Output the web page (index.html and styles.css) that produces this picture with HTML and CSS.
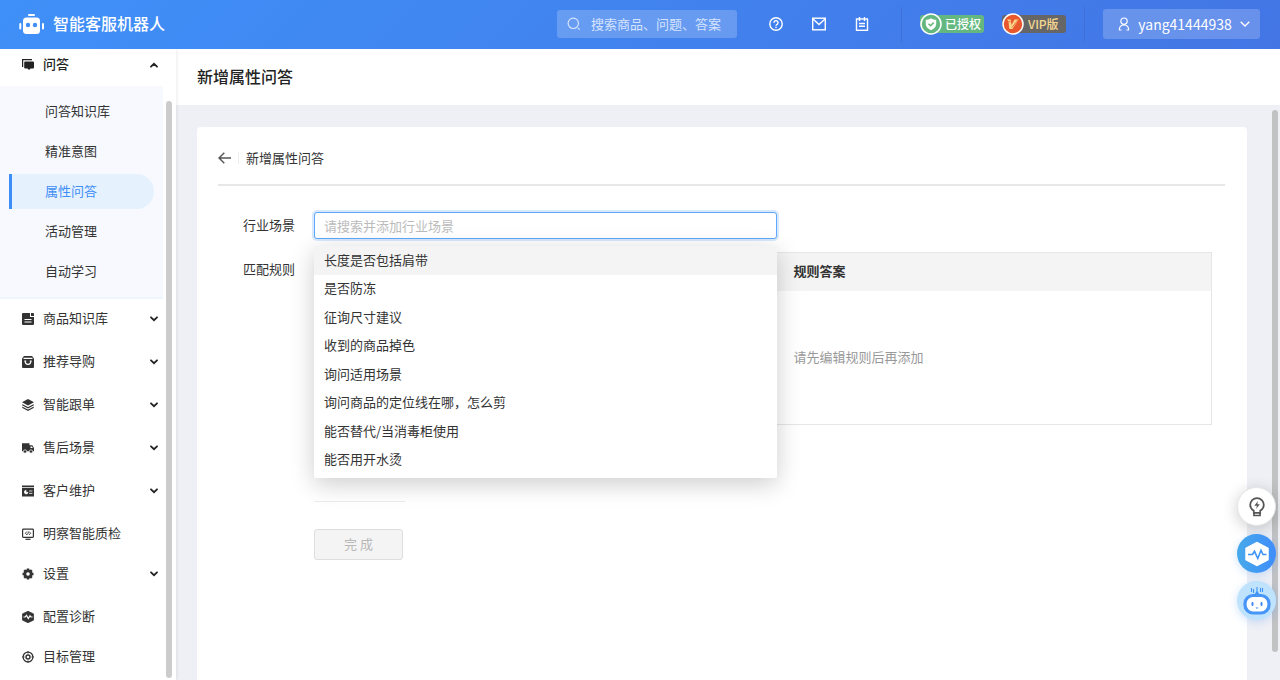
FILE: index.html
```html
<!DOCTYPE html>
<html lang="zh-CN">
<head>
<meta charset="utf-8">
<meta name="viewport" content="width=device-width, initial-scale=1">
<title>新增属性问答</title>
<link rel="stylesheet" href="styles.css">
</head>
<body>
<svg class="defs" aria-hidden="true">
  <symbol id="chevron" viewBox="0 0 8 6"><path d="M1 1.300 4 4.200 7 1.300" fill="none" stroke="currentColor" stroke-width="1.800" stroke-linecap="round"/></symbol>
</svg>
<div class="app">
  <header class="topbar">
    <a class="brand" href="#">
      <svg width="26" height="22" viewBox="0 0 26 22" fill="#fff" aria-hidden="true">
        <rect x="9" y="1" width="7" height="2" rx="1"/>
        <rect x="4" y="4.500" width="17" height="16.500" rx="3.500"/>
        <rect x="0.300" y="10" width="2" height="6.500" rx="1"/><rect x="23" y="10" width="2" height="6.500" rx="1"/>
        <circle cx="9" cy="12" r="2.200" fill="#3f8df6"/><circle cx="16" cy="12" r="2.200" fill="#3f8df6"/>
      </svg>
      <span>智能客服机器人</span>
    </a>
    <label class="search">
      <svg width="14" height="14" viewBox="0 0 14 14" fill="none" stroke="currentColor" stroke-width="1.200" aria-hidden="true"><circle cx="6.300" cy="6.300" r="5.200"/><path d="m11 11 1.700 1.700"/></svg>
      <input type="text" placeholder="搜索商品、问题、答案" aria-label="搜索">
    </label>
    <nav class="tools" aria-label="工具">
      <button type="button" aria-label="帮助"><svg width="14" height="14" viewBox="0 0 14 14" fill="none" stroke="#fff" stroke-width="1.400"><circle cx="7" cy="7" r="6.200"/><path d="M5 5.700a2 2 0 1 1 3.100 1.600C7.300 7.800 7 8.100 7 8.800M7 9.700V11"/></svg></button>
      <button type="button" aria-label="消息"><svg width="14" height="14" viewBox="0 0 14 14" fill="none" stroke="#fff" stroke-width="1.400"><rect x=".7" y="1.200" width="12.600" height="11.600"/><path d="m1 2 6 5.500L13 2"/></svg></button>
      <button type="button" aria-label="记录"><svg width="14" height="14" viewBox="0 0 14 14" fill="none" stroke="#fff" stroke-width="1.400"><rect x="1.500" y="2" width="11" height="11.300"/><path d="M4.500 0v4M9.500 0v4M4 6.500h6M4 9.300h6"/></svg></button>
    </nav>
    <div class="badges">
      <span class="badge badge-auth">
        <svg width="22" height="22" viewBox="0 0 22 22" aria-hidden="true"><circle cx="11" cy="11" r="10" fill="#64b87f" stroke="#fff" stroke-width="1.500"/><path d="M11 5.200c2 1.300 3.500 1.600 5.200 1.600v4.200c0 3-2.200 4.800-5.200 6.200-3-1.400-5.200-3.200-5.200-6.200V6.800C7.500 6.800 9 6.500 11 5.200Z" fill="#fff"/><path d="m8.500 10.700 2 2 3.200-3.100" fill="none" stroke="#64b87f" stroke-width="1.500"/></svg>
        <span>已授权</span>
      </span>
      <span class="badge badge-vip">
        <svg width="22" height="22" viewBox="0 0 22 22" aria-hidden="true"><circle cx="11" cy="11" r="10" fill="#e9582c" stroke="#fff" stroke-width="1.500"/><path d="M5 6.500h3.600l1 5.500 2.900-5.500h4.300L10.400 16H7.300L6.500 8.500Z" fill="#fbd58b"/><path d="m10 14.500 6-7.500M6.500 8.700h2" stroke="#e9582c" stroke-width=".8"/></svg>
        <span>VIP版</span>
      </span>
    </div>
    <button type="button" class="user">
      <svg width="12" height="14" viewBox="0 0 12 14" fill="none" stroke="#fff" stroke-width="1.200" aria-hidden="true"><circle cx="6" cy="4.200" r="3.200"/><path d="M1 13h2.500M11 13H8.500M1.300 13c0-3 1.500-5 4.700-5s4.700 2 4.700 5"/></svg>
      <span>yang41444938</span>
      <svg width="10" height="6" viewBox="0 0 10 6" fill="none" stroke="#fff" stroke-width="1.300" aria-hidden="true"><path d="m.7.700 4.300 4.300L9.300.7"/></svg>
    </button>
  </header>

  <aside class="sidebar">
    <nav class="menu" aria-label="主菜单">
      <button type="button" class="row row-open" aria-expanded="true">
        <svg class="icon" viewBox="0 0 12 12" fill="currentColor"><path d="M0 0h10v1.200H1.200V8H0Z"/><path d="M3.200 2.400H11a1 1 0 0 1 1 1v5a1 1 0 0 1-1 1H8.600L7 11 5.500 9.400H3.200a1 1 0 0 1-1-1v-5a1 1 0 0 1 1-1Z"/></svg>
        <span>问答</span><svg class="arrow arrow-up"><use href="#chevron"/></svg>
      </button>
      <div class="submenu">
        <a href="#">问答知识库</a>
        <a href="#">精准意图</a>
        <a href="#" class="active" aria-current="page">属性问答</a>
        <a href="#">活动管理</a>
        <a href="#">自动学习</a>
      </div>
      <button type="button" class="row row-group">
        <svg class="icon" viewBox="0 0 12 12"><path d="M1 0h7v4h4v7a1 1 0 0 1-1 1H1a1 1 0 0 1-1-1V1a1 1 0 0 1 1-1ZM9 0h2a1 1 0 0 1 1 1v2H9Z" fill="currentColor"/><path d="M2.500 6.500h7M2.500 9h7" stroke="#fff"/></svg>
        <span>商品知识库</span><svg class="arrow"><use href="#chevron"/></svg>
      </button>
      <button type="button" class="row row-group">
        <svg class="icon" viewBox="0 0 12 12"><path d="M2 0h8l2 2.500V11a1 1 0 0 1-1 1H1a1 1 0 0 1-1-1V2.500Z" fill="currentColor"/><path d="M1.500 2.300h9M3.200 5c0 4.500 5.600 4.500 5.600 0" fill="none" stroke="#fff" stroke-width="1.200"/><path d="M2.300 5h2M7.700 5h2" stroke="#fff"/></svg>
        <span>推荐导购</span><svg class="arrow"><use href="#chevron"/></svg>
      </button>
      <button type="button" class="row row-group">
        <svg class="icon" viewBox="0 0 12 12"><path d="m6 0 6 3.200-6 3.300L0 3.200Z" fill="currentColor"/><path d="m.3 5.800 5.700 3 5.700-3M.3 8.300l5.700 3 5.700-3" fill="none" stroke="currentColor" stroke-width="1.200"/></svg>
        <span>智能跟单</span><svg class="arrow"><use href="#chevron"/></svg>
      </button>
      <button type="button" class="row row-group">
        <svg class="icon" viewBox="0 0 12 12" fill="currentColor"><path d="M0 1.300h7.500v8H0ZM7.500 3.300h2.800L12 6v3.300H7.500Z"/><path d="M8.500 4.400h1.400l1 1.600H8.500Z" fill="#fff"/><circle cx="3" cy="9.500" r="1.700" stroke="#fff" stroke-width=".7"/><circle cx="9" cy="9.500" r="1.700" stroke="#fff" stroke-width=".7"/></svg>
        <span>售后场景</span><svg class="arrow"><use href="#chevron"/></svg>
      </button>
      <button type="button" class="row row-group">
        <svg class="icon" viewBox="0 0 12 12"><path d="M0 .5h12v1.700H0ZM0 3h12v8.500H0Z" fill="currentColor"/><path d="M4 5.300a1.800 1.800 0 1 0 2 2.100H4ZM7.200 6h3.200M7.200 8.400h3.200" fill="#fff" stroke="#fff" stroke-width=".8"/></svg>
        <span>客户维护</span><svg class="arrow"><use href="#chevron"/></svg>
      </button>
      <a href="#" class="row">
        <svg class="icon" viewBox="0 0 12 12" fill="none" stroke="currentColor"><rect x=".6" y="1.100" width="10.800" height="8.300" rx=".8" stroke-width="1.200"/><path d="M3.500 11.300h5" stroke-width="1.200"/><path d="M5 3.500 3.300 5.300 5 6.900M7 3.500l1.700 1.800L7 6.900M6.500 3.800l-1 2.800" stroke-width=".9"/></svg>
        <span>明察智能质检</span>
      </a>
      <button type="button" class="row row-group">
        <svg class="icon" viewBox="0 0 12 12"><path d="M6 .5v11M.5 6h11M2.200 2.200l7.600 7.600M9.800 2.200 2.200 9.800" stroke="currentColor" stroke-width="2.500"/><circle cx="6" cy="6" r="4.500" fill="currentColor"/><circle cx="6" cy="6" r="1.800" fill="#fff"/></svg>
        <span>设置</span><svg class="arrow"><use href="#chevron"/></svg>
      </button>
      <a href="#" class="row">
        <svg class="icon" viewBox="0 0 12 12"><path d="m6 .3 5.600 2.600v6.200L6 11.700.4 9.100V2.900Z" fill="currentColor" stroke="currentColor" stroke-width=".8" stroke-linejoin="round"/><path d="M1.500 6h1.800l1.200-1.700 1.800 3.200L8 4.700 9 6h1.500" fill="none" stroke="#fff" stroke-width="1.200"/></svg>
        <span>配置诊断</span>
      </a>
      <a href="#" class="row">
        <svg class="icon" viewBox="0 0 12 12" fill="none" stroke="currentColor"><circle cx="6" cy="6" r="4.900" stroke-width="1.200"/><circle cx="6" cy="6" r="2" stroke-width="1.400"/><path d="M6 0v2.500M6 9.500V12M0 6h2.500M9.500 6H12"/></svg>
        <span>目标管理</span>
      </a>
    </nav>
    <div class="thumb thumb-side"></div>
  </aside>

  <main class="main">
    <h1 class="page-title">新增属性问答</h1>
    <div class="content">
      <section class="card">
        <div class="card-head">
          <button type="button" class="back" aria-label="返回"><svg width="13" height="12" viewBox="0 0 13 12" fill="none" stroke="#555" stroke-width="1.400"><path d="M6.300.7 1 6l5.300 5.300M1 6h12"/></svg></button>
          <h2>新增属性问答</h2>
        </div>
        <form class="form">
          <label class="label label-input" for="scene">行业场景</label>
          <div class="picker">
            <input id="scene" type="text" role="combobox" aria-expanded="true" aria-controls="scene-list" placeholder="请搜索并添加行业场景">
            <ul class="options" id="scene-list" role="listbox">
              <li role="option" aria-selected="false" class="hover">长度是否包括肩带</li>
              <li role="option" aria-selected="false">是否防冻</li>
              <li role="option" aria-selected="false">征询尺寸建议</li>
              <li role="option" aria-selected="false">收到的商品掉色</li>
              <li role="option" aria-selected="false">询问适用场景</li>
              <li role="option" aria-selected="false">询问商品的定位线在哪，怎么剪</li>
              <li role="option" aria-selected="false">能否替代/当消毒柜使用</li>
              <li role="option" aria-selected="false">能否用开水烫</li>
            </ul>
          </div>
          <span class="label label-rules" id="rules-label">匹配规则</span>
          <table class="rules" aria-labelledby="rules-label">
            <thead><tr><td class="rule-col"></td><th scope="col">规则答案</th></tr></thead>
            <tbody><tr><td></td><td>请先编辑规则后再添加</td></tr></tbody>
          </table>
          <div class="submit">
            <button type="button" disabled>完 成</button>
          </div>
        </form>
      </section>
    </div>
    <div class="thumb thumb-main"></div>
  </main>
</div>

<div class="floats">
  <button type="button" class="float float-tip" aria-label="提示">
    <svg width="16" height="20" viewBox="0 0 16 20" fill="none" stroke="#555" stroke-width="1.700"><path d="M4.800 13.800C2.800 12.500 1.200 10.500 1.200 8a6.800 6.800 0 0 1 13.600 0c0 2.500-1.600 4.500-3.600 5.800v2H4.800ZM5 16v2.500h6V16"/><path d="M9 4 5.300 8.700H8L7 12l3.800-4.700H8.300Z" fill="#555" stroke="none"/></svg>
  </button>
  <button type="button" class="float float-pulse" aria-label="诊断">
    <svg width="26" height="26" viewBox="0 0 26 26"><path d="m13 2 10.500 5.500v11L13 24 2.500 18.500v-11Z" fill="#fff" stroke="#fff" stroke-width="2.500" stroke-linejoin="round"/><path d="M4 13.500h4.500l2-3.200 3.300 7.200 3.200-8.300 2 4.300h3.500" fill="none" stroke="#3f93f5" stroke-width="1.600"/></svg>
  </button>
  <button type="button" class="float float-bot" aria-label="机器人">
    <svg width="28" height="32" viewBox="0 0 28 32"><path d="M14 2v8M10.500 4v4M17.500 3v4M8.500 3v4M19.500 3v4" stroke="#3f93f5" stroke-width="1.100"/><path d="m10 11 4-5 4 5Z" fill="#3f93f5"/><rect x="2" y="10.500" width="24" height="17.500" rx="8" fill="#fff" stroke="#4795f7" stroke-width="3.200"/><path d="M9.500 18v2M18.500 18v2" stroke="#3f87ef" stroke-width="2" stroke-linecap="round"/><path d="M12.500 22.500h3L14 24Z" fill="#3f87ef"/></svg>
  </button>
</div>
</body>
</html>
```

FILE: styles.css
```css
* { box-sizing: border-box; }

body {
  margin: 0;
  color: #333;
  background: #eff0f5;
  font: 13px/20px "Noto Sans CJK SC", "Noto Sans", sans-serif;
}

button, input { font: inherit; color: inherit; }
button { padding: 0; border: 0; background: none; cursor: pointer; }
a { color: inherit; text-decoration: none; }
svg { display: block; flex: none; }
.defs { position: absolute; width: 0; height: 0; }

.app {
  display: grid;
  grid-template: auto minmax(0, 1fr) / 176px minmax(0, 1fr);
  height: 100vh;
  overflow: hidden;
}

/* Top bar */
.topbar {
  grid-column: 1 / -1;
  display: flex;
  align-items: center;
  height: 49px;
  padding: 0 20px 1px 19px;
  color: #fff;
  background: linear-gradient(135deg, #3f90f8, #4375e5);
}
.brand { display: flex; align-items: center; gap: 8px; margin-right: auto; font-size: 16px; font-weight: 500; }
.brand span { padding-bottom: 2px; }
.search {
  display: flex;
  align-items: center;
  gap: 10px;
  width: 180px;
  height: 28px;
  padding: 0 10px;
  border-radius: 3px;
  color: #d6e4fc;
  background: rgba(255, 255, 255, .2);
}
.search input { flex: 1; min-width: 0; padding: 0 0 1px; border: 0; outline: 0; background: none; }
.search input::placeholder { color: #d6e4fc; opacity: 1; }
.tools { display: flex; gap: 29px; padding: 0 32px; }
.badges {
  display: flex;
  align-items: center;
  gap: 18px;
  height: 35px;
  margin-right: 18px;
  padding: 0 18px;
  border: solid #3f6fd9;
  border-width: 0 1px;
}
.badge {
  display: flex;
  align-items: center;
  gap: 3px;
  width: 64px;
  height: 18px;
  border-radius: 3px 3px 3px 9px;
  font-size: 12px;
  font-weight: 500;
  line-height: 18px;
  white-space: nowrap;
}
.badge-auth { background: #64b87f; }
.badge-vip { color: #f7d88f; background: #666; gap: 4px; }
.user {
  display: flex;
  align-items: center;
  justify-content: space-between;
  width: 157px;
  height: 30px;
  padding: 0 10px 0 15px;
  border-radius: 3px;
  font-size: 14px;
  background: rgba(255, 255, 255, .2);
}
.user span { padding-bottom: 1px; }

/* Sidebar */
.sidebar { position: relative; z-index: 1; background: #fff; box-shadow: 0 0 4px rgba(0, 0, 0, .12); clip-path: inset(0 -6px 0 0); }
.menu { display: flex; flex-direction: column; width: 163px; }
.row {
  display: flex;
  flex: none;
  align-items: center;
  gap: 9px;
  height: 40px;
  padding: 0 5px 0 22px;
  text-align: left;
}
.row span { padding-bottom: 2px; }
.row-open { height: 37px; padding-bottom: 6px; font-weight: 500; color: #222; }
.row-group { margin-bottom: 3px; }
.icon { width: 12px; height: 12px; }
.arrow { width: 8px; height: 6px; margin-left: auto; color: #222; }
.arrow-up { transform: rotate(180deg); }
.submenu {
  display: grid;
  gap: 5px;
  padding: 8px 9px;
  border-bottom: 2px solid #eff5fc;
  background: #f7f9fe;
}
.submenu a { height: 35px; padding-left: 33px; border-left: 3px solid transparent; border-radius: 0 18px 18px 0; line-height: 33px; }
.submenu .active { color: #3e8ef7; border-color: #3e8ef7; background: #e6f1fe; }

.thumb { position: absolute; border-radius: 3px; background: #c1c2c4; }
.thumb-side { top: 52px; right: 4px; bottom: 2px; width: 6px; background: #ccc; }
.thumb-main { top: 61px; right: 2px; bottom: 28px; width: 6px; }

/* Page */
.main { position: relative; display: flex; flex-direction: column; min-width: 0; }
.page-title { margin: 0; padding: 15px 21px 17px; background: #fff; font-size: 16px; font-weight: 500; line-height: 24px; color: #222; }
.content { flex: 1; display: flex; padding: 22px 33px 0 21px; }
.card { flex: 1; padding: 19px 22px 0 21px; border-radius: 4px 4px 0 0; background: #fff; }
.card-head { display: flex; align-items: center; gap: 7px; padding-bottom: 14px; border-bottom: 2px solid #e7e7e7; }
.card-head h2 { margin: 6px 0; padding-left: 7px; border-left: 1px solid #eee; font-size: 13px; font-weight: 400; line-height: 12px; }

.form { display: grid; grid-template-columns: 77px minmax(0, 1fr); column-gap: 19px; padding: 26px 13px 0 0; }
.label { text-align: right; }
.label-input { line-height: 25px; }
.label-rules { padding-top: 7px; }
.picker { position: relative; width: 463px; max-width: 100%; margin-bottom: 13px; }
.picker input {
  display: block;
  width: 100%;
  height: 27px;
  padding: 0 9px 1px;
  border: 1px solid #5fa8fb;
  border-radius: 3px;
  outline: 0;
  box-shadow: 0 0 0 2px rgba(62, 142, 247, .2);
}
.picker input::placeholder { color: #bcbcbc; opacity: 1; }
.options {
  position: absolute;
  z-index: 2;
  top: 34px;
  left: 0;
  right: 0;
  display: grid;
  grid-auto-rows: 1fr;
  height: 232px;
  margin: 0;
  padding: 0 0 4px;
  border-radius: 2px;
  background: #fff;
  box-shadow: 0 6px 24px rgba(0, 0, 0, .2);
  list-style: none;
}
.options li { display: flex; align-items: center; padding: 0 10px 1px; }
.options .hover { background: #f4f4f4; }

.rules { width: 100%; border: 1px solid #e6e6e6; border-collapse: collapse; table-layout: fixed; }
.rules th, .rules td { padding: 0 16px; text-align: left; }
.rules thead { background: #f4f4f4; }
.rules th { height: 38px; padding-bottom: 1px; font-weight: 700; }
.rules tbody td { height: 134px; color: #999; }
.rules .rule-col { width: 463px; }
.submit { grid-column: 2; width: 91px; margin-top: 76px; padding-top: 27px; border-top: 1px solid #ececec; }
.submit button { width: 89px; height: 31px; padding-bottom: 1px; border: 1px solid #dedede; border-radius: 3px; color: #b8b8b8; background: #f4f4f4; cursor: default; }

/* Floating shortcuts */
.floats { position: fixed; z-index: 3; right: 4px; bottom: 60px; display: grid; gap: 8px; }
.float { display: grid; place-items: center; width: 39px; height: 39px; border-radius: 50%; }
.float-tip { border: 1px solid #e4e4e4; background: #fff; box-shadow: 0 3px 16px rgba(0, 0, 0, .2); }
.float-pulse { background: linear-gradient(90deg, #47a9e9, #3f8dfb); box-shadow: 0 2px 8px rgba(62, 142, 247, .25); }
.float-bot { background: #bfe2fd; box-shadow: 0 2px 8px rgba(62, 142, 247, .25); }
```
